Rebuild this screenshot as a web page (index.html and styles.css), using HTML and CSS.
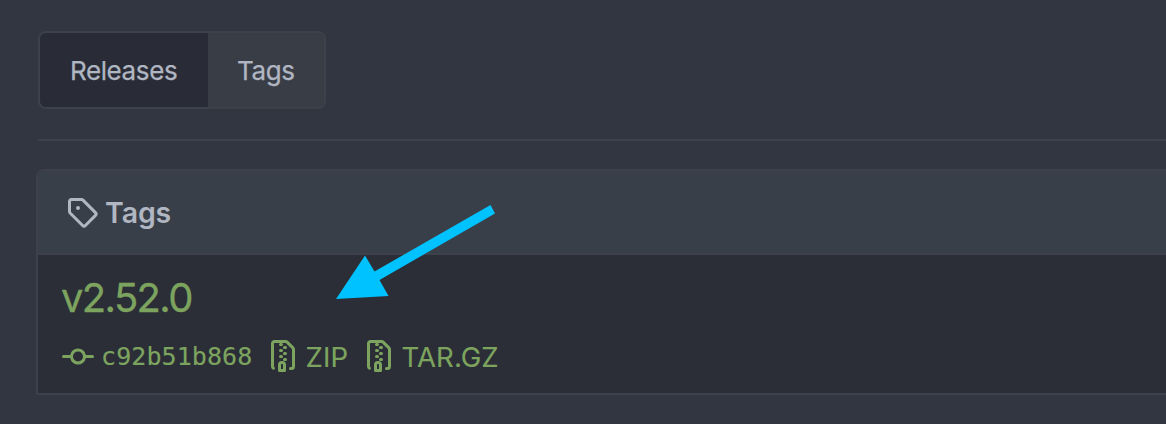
FILE: index.html
```html
<!DOCTYPE html>
<html lang="en">
<head>
<meta charset="utf-8">
<title>Tags</title>
<link rel="stylesheet" href="styles.css">
</head>
<body>
<main class="page">
  <nav class="switch">
    <a class="switch-item active">Releases</a>
    <a class="switch-item">Tags</a>
  </nav>
  <div class="divider"></div>
  <section class="panel">
    <header class="panel-header">
      <svg class="icon" viewBox="0 0 16 16"><path d="M1 7.775V2.75C1 1.784 1.784 1 2.75 1h5.025c.464 0 .91.184 1.238.513l6.25 6.25a1.75 1.75 0 0 1 0 2.474l-5.026 5.026a1.75 1.75 0 0 1-2.474 0l-6.25-6.25A1.752 1.752 0 0 1 1 7.775Zm1.5 0c0 .066.026.13.073.177l6.25 6.25a.25.25 0 0 0 .354 0l5.025-5.025a.25.25 0 0 0 0-.354l-6.25-6.25a.25.25 0 0 0-.177-.073H2.75a.25.25 0 0 0-.25.25ZM6 5a1 1 0 1 1 0 2 1 1 0 0 1 0-2Z"/></svg>
      <h4 class="heading">Tags</h4>
    </header>
    <div class="panel-body">
      <h3 class="version">v2.52.0</h3>
      <div class="downloads">
        <a class="link commit"><svg class="icon" viewBox="0 0 16 16"><path d="M11.93 8.5a4.002 4.002 0 0 1-7.86 0H.75a.75.75 0 0 1 0-1.5h3.32a4.002 4.002 0 0 1 7.86 0h3.32a.75.75 0 0 1 0 1.5Zm-1.43-.75a2.5 2.5 0 1 0-5 0 2.5 2.5 0 0 0 5 0Z"/></svg><span class="sha">c92b51b868</span></a>
        <a class="link zip"><svg class="icon" viewBox="0 0 16 16"><path d="M3.5 1.75v11.5c0 .09.048.173.126.217a.75.75 0 0 1-.752 1.298A1.748 1.748 0 0 1 2 13.25V1.75C2 .784 2.784 0 3.75 0h5.586c.464 0 .909.185 1.237.513l2.914 2.914c.329.328.513.773.513 1.237v8.586A1.75 1.75 0 0 1 12.25 15h-.5a.75.75 0 0 1 0-1.5h.5a.25.25 0 0 0 .25-.25V4.664a.25.25 0 0 0-.073-.177L9.513 1.573a.25.25 0 0 0-.177-.073H7.25a.75.75 0 0 1 0 1.5h-.5a.75.75 0 0 1 0-1.5h-3a.25.25 0 0 0-.25.25Zm3.75 8.75h.5c.966 0 1.75.784 1.75 1.75v3a.75.75 0 0 1-.75.75h-2.5a.75.75 0 0 1-.75-.75v-3c0-.966.784-1.75 1.75-1.75ZM6 5.25a.75.75 0 0 1 .75-.75h.5a.75.75 0 0 1 0 1.5h-.5A.75.75 0 0 1 6 5.25Zm.75 2.25h.5a.75.75 0 0 1 0 1.5h-.5a.75.75 0 0 1 0-1.5ZM8 6.75A.75.75 0 0 1 8.75 6h.5a.75.75 0 0 1 0 1.5h-.5A.75.75 0 0 1 8 6.75ZM8.75 3h.5a.75.75 0 0 1 0 1.5h-.5a.75.75 0 0 1 0-1.5ZM8 9.75A.75.75 0 0 1 8.75 9h.5a.75.75 0 0 1 0 1.5h-.5A.75.75 0 0 1 8 9.75Zm-1 2.5v2.25h1v-2.25a.25.25 0 0 0-.25-.25h-.5a.25.25 0 0 0-.25.25Z"/></svg><span class="format">ZIP</span></a>
        <a class="link tar"><svg class="icon" viewBox="0 0 16 16"><path d="M3.5 1.75v11.5c0 .09.048.173.126.217a.75.75 0 0 1-.752 1.298A1.748 1.748 0 0 1 2 13.25V1.75C2 .784 2.784 0 3.75 0h5.586c.464 0 .909.185 1.237.513l2.914 2.914c.329.328.513.773.513 1.237v8.586A1.75 1.75 0 0 1 12.25 15h-.5a.75.75 0 0 1 0-1.5h.5a.25.25 0 0 0 .25-.25V4.664a.25.25 0 0 0-.073-.177L9.513 1.573a.25.25 0 0 0-.177-.073H7.25a.75.75 0 0 1 0 1.5h-.5a.75.75 0 0 1 0-1.5h-3a.25.25 0 0 0-.25.25Zm3.75 8.75h.5c.966 0 1.75.784 1.75 1.75v3a.75.75 0 0 1-.75.75h-2.5a.75.75 0 0 1-.75-.75v-3c0-.966.784-1.75 1.75-1.75ZM6 5.25a.75.75 0 0 1 .75-.75h.5a.75.75 0 0 1 0 1.5h-.5A.75.75 0 0 1 6 5.25Zm.75 2.25h.5a.75.75 0 0 1 0 1.5h-.5a.75.75 0 0 1 0-1.5ZM8 6.75A.75.75 0 0 1 8.75 6h.5a.75.75 0 0 1 0 1.5h-.5A.75.75 0 0 1 8 6.75ZM8.75 3h.5a.75.75 0 0 1 0 1.5h-.5a.75.75 0 0 1 0-1.5ZM8 9.75A.75.75 0 0 1 8.75 9h.5a.75.75 0 0 1 0 1.5h-.5A.75.75 0 0 1 8 9.75Zm-1 2.5v2.25h1v-2.25a.25.25 0 0 0-.25-.25h-.5a.25.25 0 0 0-.25.25Z"/></svg><span class="format">TAR.GZ</span></a>
      </div>
    </div>
  </section>
  <svg class="arrow" viewBox="0 0 160 96"><path d="M0 95 29 51.500 38.500 67.500 154.500 1 159 9.500 43.500 76 52.500 92Z"/></svg>
</main>
</body>
</html>
```
FILE: styles.css
```css
* { box-sizing: border-box; }
body {
  margin: 0;
  background: #323640;
  color: #b0b6c2;
  font-family: Inter, "Liberation Sans", sans-serif;
  font-size: 26px;
}
.page {
  position: relative;
  height: 424px;
  padding: 31px 0 0 36px;
  overflow: hidden;
  display: flex;
  flex-direction: column;
}
.switch {
  display: flex;
  align-self: flex-start;
  width: 288px;
  height: 78px;
  margin-left: 2px;
  border: 2px solid #3d414b;
  border-radius: 8px;
  overflow: hidden;
}
.switch-item {
  flex: 1;
  display: flex;
  align-items: center;
  padding-left: 29px;
  background: #393d46;
  letter-spacing: -0.4px;
  -webkit-text-stroke: 0.25px currentColor;
}
.switch-item.active {
  flex: 0 0 168px;
  padding-left: 30px;
  background: #292c36;
}
.divider {
  height: 2px;
  margin: 30px 0 28px 2px;
  background: #3d414b;
}
.panel {
  height: 226px;
  margin-right: -10px;
  border: 2px solid #3d414b;
  border-radius: 8px 0 0 0;
  background: #2b2e37;
  overflow: hidden;
}
.panel-header {
  display: flex;
  align-items: center;
  height: 84px;
  padding: 0 0 0 28px;
  border-bottom: 2px solid #3d414b;
  background: #393f48;
}
.heading {
  margin: 0 0 0 7px;
  font-size: 28.5px;
  font-weight: 600;
  letter-spacing: -0.1px;
}
.icon {
  flex: none;
  width: 32px;
  height: 32px;
  fill: currentColor;
}
.panel-body {
  padding: 18px 0 0 24px;
  color: #7da45f;
}
.version {
  margin: 0 0 0 -1px;
  font-size: 40px;
  font-weight: 400;
  line-height: 50px;
  letter-spacing: -1.65px;
  -webkit-text-stroke: 0.3px currentColor;
}
.downloads {
  display: flex;
  margin-top: 17px;
}
.link {
  display: flex;
  align-items: center;
  height: 32px;
  white-space: nowrap;
}
.commit { width: 205px; }
.zip { width: 96px; }
.commit .icon { margin-top: 2px; }
.sha {
  margin-left: 7px;
  font-family: "DejaVu Sans Mono", monospace;
  font-size: 25px;
  letter-spacing: 0.08px;
  -webkit-text-stroke: 0.15px currentColor;
}
.format {
  margin: 2px 0 0 6.5px;
  font-size: 27.5px;
  letter-spacing: 0.1px;
  -webkit-text-stroke: 0.15px currentColor;
}
.arrow {
  position: absolute;
  left: 336px;
  top: 204px;
  width: 160px;
  height: 96px;
  fill: #00c2ff;
}
```
